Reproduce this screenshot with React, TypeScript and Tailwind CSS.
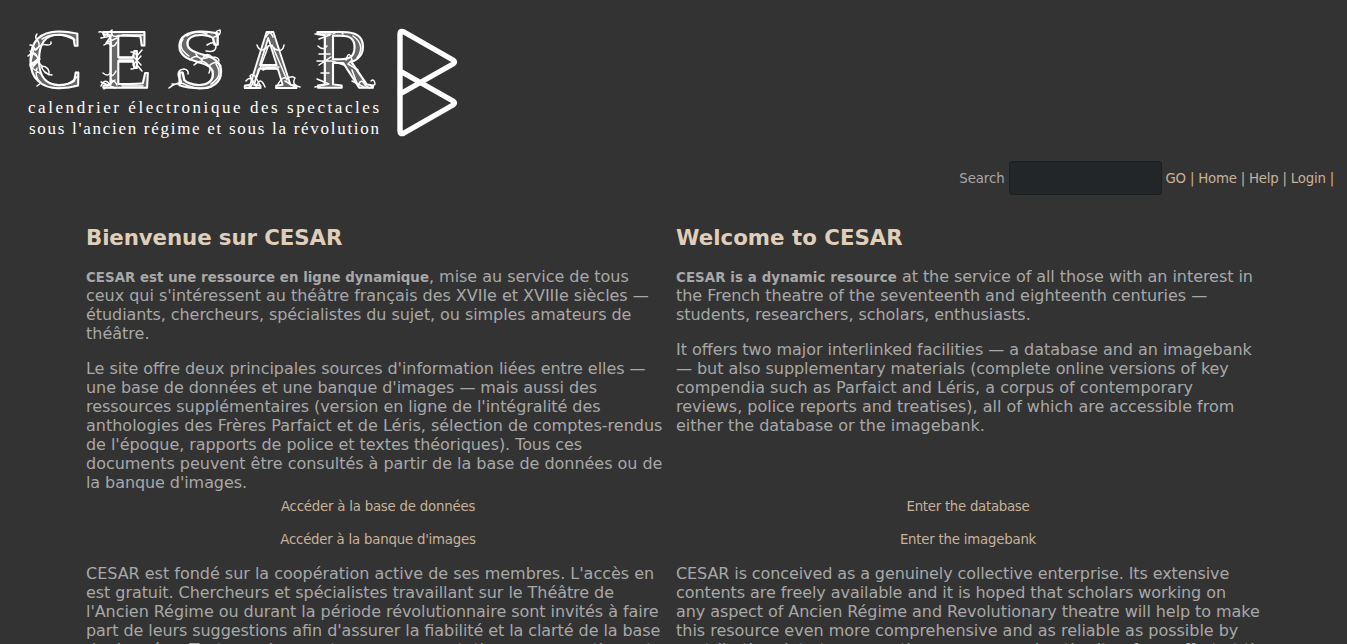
import React from "react";

const letters = [
  { ch: "C", x: 27, w: 56 },
  { ch: "E", x: 101, w: 51 },
  { ch: "S", x: 173, w: 54 },
  { ch: "A", x: 244, w: 53 },
  { ch: "R", x: 315, w: 58 },
];

function Logo() {
  return (
    <svg width="480" height="156" viewBox="0 0 480 156" className="block" fill="none" stroke="#fff" strokeLinecap="round" strokeLinejoin="round">
      <g fontFamily="Liberation Serif, serif" fontSize="84" strokeWidth="2" fill="#666">
        {letters.map((l) => (
          <text key={l.ch} x={l.x} y="88" textLength={l.w} lengthAdjust="spacingAndGlyphs">{l.ch}</text>
        ))}
      </g>
      <g strokeWidth="1.5">
        <path d="M37 34q-3 4 1 7q3 5-2 9M30 45q4 0 5 5q7-7 12-5q5 0 4-3M28 56q6-6 9 0t-7 10M31 64q5-5 10 1q2 9 11 10M37 68q-3 9 4 15l-4 3M42 66q8 1 7 9M30 51l10 8-8 9 9 6M34 48l-4 17 9-7M42 39q14-9 33 1M45 80q17 13 33-4" />
        <path d="M99 32q5-1 5 4l8-6q-2 8 6 6M101 38l10-2-5 7 11-5M104 45q4-3 7 0t6-3M111 40v40M119 59h14M119 62h14M131 52q5 0 6 4l5-6M131 69q5 0 6-4l5 6M133 56l8 9M133 65l8-9M122 35h21M122 86h21M103 73q5 4 7 0q2 6 6-2M101 86q4-9 9-1 2-9 7 0M101 82l14 6M104 89l11-9" />
        <path d="M214 37q8-2 6-7q-6 1-3 6M207 45q8-5 9 1 0 7-10 5M190 60q6-7 12 0 4-9 10-3 7 0 7 4M196 54q3 7 13 3M194 65q8-8 15 1 7-7 12 0M172 84q14 1 7-6-3-8 5-9 5 1 4 5M169 88q10-8 17-3 15 6 25 2M207 64q5 3 2 9M183 39q-6 9 6 17M216 64q8 12-5 20M187 36q9-7 20-2" />
        <path d="M266 37q4-8 7 0M257 45q2 7 8 4 5-7 10 0 8 4 9-4M262 67h17M263 70q8-5 15 0M245 88q12-1 5-12 2-3 5 0l5 9M256 87q4-12 9 0M276 88q7-14 11-9 4-4 8-1-4 7 5 9M246 81q4-6 9 3M285 81l10 6M268 47l-12 32M272 45l15 35" />
        <path d="M315 34h16M319 39l11-4M318 46q5 5 9 0M319 54h11M317 61h15l12 4M319 65l12-8M321 73h8M315 87l14-3-12-5M325 38v43M333 34q7-5 10 0M353 36q13 9 4 22M346 60q3-11 6 0l-4 4 10 6M352 70l6 16q3-9 7-1 5 6 10-1-1-6-4-3M352 81l12 6" />
      </g>
      <g fill="#fff" stroke="none" fontFamily="Liberation Serif, serif" fontSize="17">
        <text x="28" y="113" textLength="351">calendrier électronique des spectacles</text>
        <text x="29" y="134" textLength="350">sous l'ancien régime et sous la révolution</text>
      </g>
      <path strokeWidth="5.4" d="M400 94V34q0-4 4-2l49 28q3 2 0 4L400 94M400 71L453 101q3 2 0 4l-49 28q-4 2-4-2V71" />
    </svg>
  );
}

function Line({ t, children }: { t?: string; children: React.ReactNode }) {
  return <span className={`block ${t ?? ""}`}>{children}</span>;
}

const link = "text-[13.333px] text-[#c8b299]";
const heading = "text-[21.333px] font-bold leading-[26px] text-[#dfceb9]";

export default function App() {
  return (
    <div className="h-[644px] w-full overflow-hidden bg-[#333333] font-['DejaVu_Sans',sans-serif] text-base leading-[19px] text-[#a8a8a8] [font-feature-settings:'liga'_1]">
      <header className="h-[161px]"><Logo /></header>
      <div className="flex h-[34px] items-center justify-end pr-[13px] text-[13.333px]">
        <label className="flex items-center gap-1"><span className="tracking-[-0.1px]">Search</span>
          <input className="h-[34px] w-[153px] rounded-[3px] border border-[#1b1f20] bg-[#222628] outline-none" />
        </label>
        <nav className="ml-1 whitespace-pre tracking-[-0.22px] text-[#c8b299]"><a>GO</a> | <a>Home</a> | <a>Help</a> | <a>Login</a> |</nav>
      </div>
      <main className="ml-[86px] grid grid-cols-[590px_590px] whitespace-nowrap pt-[30px]">
        <section>
          <h1 className={`${heading} tracking-[-0.1px]`}>Bienvenue sur CESAR</h1>
          <p className="mt-4">
            <Line t="tracking-[-0.03px]"><b className="text-[13.333px] leading-none tracking-[0.05px]">CESAR est une ressource en ligne dynamique</b>, mise au service de tous</Line>
            <Line t="tracking-[-0.03px]">ceux qui s'intéressent au théâtre français des XVIIe et XVIIIe siècles —</Line>
            <Line t="tracking-[-0.07px]">étudiants, chercheurs, spécialistes du sujet, ou simples amateurs de</Line>
            <Line>théâtre.</Line>
          </p>
          <p className="mt-4">
            <Line t="tracking-[-0.04px]">Le site offre deux principales sources d'information liées entre elles —</Line>
            <Line t="tracking-[-0.07px]">une base de données et une banque d'images — mais aussi des</Line>
            <Line t="tracking-[-0.06px]">ressources supplémentaires (version en ligne de l'intégralité des</Line>
            <Line>anthologies des Frères Parfaict et de Léris, sélection de comptes-rendus</Line>
            <Line t="tracking-[-0.06px]">de l'époque, rapports de police et textes théoriques). Tous ces</Line>
            <Line t="tracking-[-0.03px]">documents peuvent être consultés à partir de la base de données ou de</Line>
            <Line t="tracking-[-0.08px]">la banque d'images.</Line>
          </p>
        </section>
        <section>
          <h1 className={heading}>Welcome to CESAR</h1>
          <p className="mt-4">
            <Line t="tracking-[-0.06px]"><b className="text-[13.333px] leading-none tracking-[0.11px]">CESAR is a dynamic resource</b> at the service of all those with an interest in</Line>
            <Line t="tracking-[-0.03px]">the French theatre of the seventeenth and eighteenth centuries —</Line>
            <Line t="tracking-[-0.06px]">students, researchers, scholars, enthusiasts.</Line>
          </p>
          <p className="mt-4">
            <Line t="tracking-[-0.04px]">It offers two major interlinked facilities — a database and an imagebank</Line>
            <Line t="tracking-[-0.06px]">— but also supplementary materials (complete online versions of key</Line>
            <Line t="tracking-[0.03px]">compendia such as Parfaict and Léris, a corpus of contemporary</Line>
            <Line t="tracking-[-0.015px]">reviews, police reports and treatises), all of which are accessible from</Line>
            <Line t="tracking-[-0.03px]">either the database or the imagebank.</Line>
          </p>
        </section>
        <div className="mt-[5px] flex w-[584px] flex-col items-center gap-[14px]">
          <a className={`${link} tracking-[-0.22px]`}>Accéder à la base de données</a>
          <a className={`${link} tracking-[-0.22px]`}>Accéder à la banque d'images</a>
        </div>
        <div className="mt-[5px] flex w-[584px] flex-col items-center gap-[14px]">
          <a className={`${link} tracking-[-0.28px]`}>Enter the database</a>
          <a className={`${link} tracking-[-0.22px]`}>Enter the imagebank</a>
        </div>
        <p className="mt-[15px]">
          <Line t="tracking-[-0.015px]">CESAR est fondé sur la coopération active de ses membres. L'accès en</Line>
          <Line t="tracking-[-0.06px]">est gratuit. Chercheurs et spécialistes travaillant sur le Théâtre de</Line>
          <Line t="tracking-[-0.055px]">l'Ancien Régime ou durant la période révolutionnaire sont invités à faire</Line>
          <Line t="tracking-[-0.08px]">part de leurs suggestions afin d'assurer la fiabilité et la clarté de la base</Line>
          <Line>de données. Tout membre peut proposer annotations ou corrections et</Line>
        </p>
        <p className="mt-[15px]">
          <Line t="tracking-[-0.1px]">CESAR is conceived as a genuinely collective enterprise. Its extensive</Line>
          <Line t="tracking-[-0.07px]">contents are freely available and it is hoped that scholars working on</Line>
          <Line t="tracking-[-0.07px]">any aspect of Ancien Régime and Revolutionary theatre will help to make</Line>
          <Line t="tracking-[-0.015px]">this resource even more comprehensive and as reliable as possible by</Line>
          <Line>contributing data to ensure the accuracy and authority of our effort at the</Line>
        </p>
      </main>
    </div>
  );
}
